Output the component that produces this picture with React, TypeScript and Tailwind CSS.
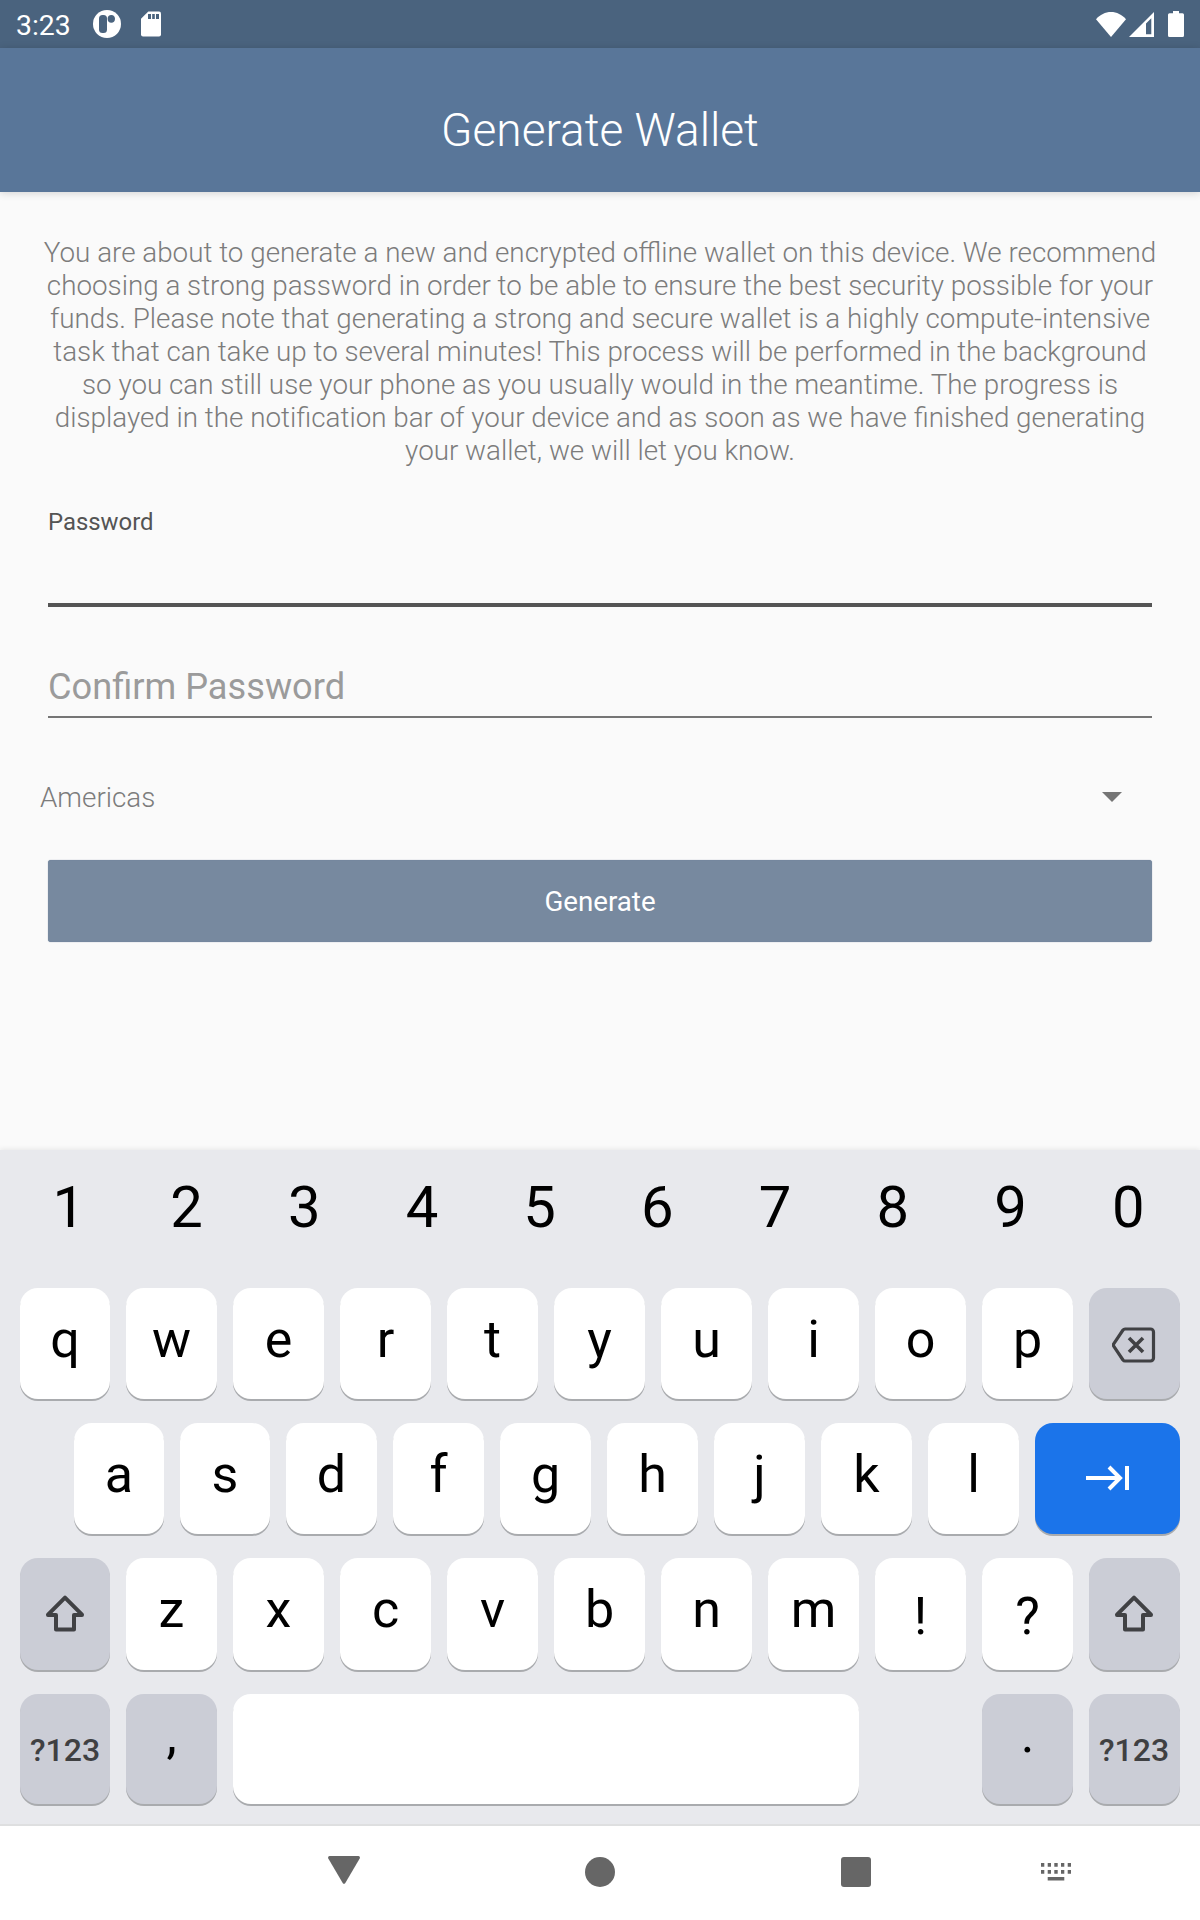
import React from "react";

const description = [
  "You are about to generate a new and encrypted offline wallet on this device. We recommend",
  "choosing a strong password in order to be able to ensure the best security possible for your",
  "funds. Please note that generating a strong and secure wallet is a highly compute-intensive",
  "task that can take up to several minutes! This process will be performed in the background",
  "so you can still use your phone as you usually would in the meantime. The progress is",
  "displayed in the notification bar of your device and as soon as we have finished generating",
  "your wallet, we will let you know.",
];

const cap = "flex shrink-0 justify-center rounded-[18px] shadow-[0_2px_0_#a9abae]";
const white = "bg-white";
const gray = "bg-[#cbcdd6]";

function Letter({ char }: { char: string }) {
  const low = char === "!" || char === "?";
  const width = "qas".includes(char) ? "w-[90px]" : "w-[91px]";
  return (
    <div className={`${cap} ${white} ${width} ${low ? "pt-[29px]" : "pt-[22px]"}`}>
      <span className="text-[52px] leading-[60px]">{char}</span>
    </div>
  );
}

function SoftKey({ char }: { char: string }) {
  return (
    <div className={`${cap} ${gray} w-[91px] ${char === "," ? "pt-[12px]" : "pt-[11px]"}`}>
      <span className="text-[52px] leading-[60px]">{char}</span>
    </div>
  );
}

function SymbolsKey({ width }: { width: string }) {
  return (
    <div className={`${cap} ${gray} ${width} items-center pt-[2px]`}>
      <span className="text-[32px] font-medium leading-[38px] text-[#3f4042]">?123</span>
    </div>
  );
}

function ShiftKey({ width }: { width: string }) {
  return (
    <div className={`${cap} ${gray} ${width} items-center`}>
      <svg width="40" height="40" viewBox="0 0 40 40" fill="none" stroke="#404144" strokeWidth="4" strokeLinejoin="round">
        <path d="M20 3.6 3 20.7V21h8v14.4h18V21h8v-.3z" />
      </svg>
    </div>
  );
}

function StatusBar() {
  return (
    <div className="flex h-12 items-center bg-[#4a637e] pl-4 pr-4 text-white">
      <span className="w-[77px] pt-[3px] text-[28.4px] leading-8">3:23</span>
      <svg width="28" height="28" viewBox="0 0 28 28">
        <circle cx="14" cy="14" r="14" fill="#fff" />
        <rect x="6" y="5" width="8" height="18" rx="3.5" fill="#4a637e" />
        <path d="M14.6 8.8c0-2.4 1.4-3.8 3.7-3.8s3.7 1.4 3.7 3.8-1.4 4-3.7 4-3.7-1.6-3.7-4z" fill="#4a637e" />
      </svg>
      <svg className="ml-5" width="20" height="26" viewBox="0 0 20 26">
        <path d="M7.3.5H18a2 2 0 0 1 2 2v21a2 2 0 0 1-2 2H2a2 2 0 0 1-2-2V7.8z" fill="#fff" />
        <path d="M7 3h3v5H7zM11.2 3h2.6v5h-2.6zM15 3h3v5h-3z" fill="#4a637e" />
      </svg>
      <svg className="ml-auto" width="30" height="25" viewBox="0 0 30 25">
        <path d="M15 25 0 7.200C4 2.700 9.300 0 15 0s11 2.700 15 7.200z" fill="#fff" />
      </svg>
      <svg className="ml-[3px]" width="25" height="25" viewBox="0 0 25 25">
        <path fillRule="evenodd" d="M25 0v25H0zM22.300 6.200 17 11.600V22.300h5.300z" fill="#fff" />
      </svg>
      <svg className="ml-[14px]" width="16" height="26" viewBox="0 0 16 26">
        <path d="M5 0h6v2.300h3.500A1.500 1.500 0 0 1 16 3.800v20.700a1.500 1.500 0 0 1-1.500 1.500h-13A1.500 1.500 0 0 1 0 24.500V3.800a1.500 1.500 0 0 1 1.500-1.500H5z" fill="#fff" />
      </svg>
    </div>
  );
}

function Form() {
  return (
    <main className="h-[958px] px-12 pt-[44px]">
      <div className="-mx-12 flex h-[231px] flex-col items-center text-[27.8px] font-light leading-[33px] text-[#7c7c7c]">
        {description.map((line) => (
          <p key={line} className="whitespace-nowrap">{line}</p>
        ))}
      </div>
      <div className="mt-[41px] h-[99px] border-b-4 border-[#545454] text-[23.9px] leading-7 text-[#545454]">Password</div>
      <div className="mt-[58px] h-[53px] border-b-2 border-[#757575] text-[36.2px] leading-[44px] text-[#9b9b9b]">
        Confirm Password
      </div>
      <div className="-ml-2 mt-[63px] flex h-8 items-center justify-between pr-[30px] text-[27.8px] font-light leading-8 text-[#7c7c7c]">
        <span className="pt-[2px]">Americas</span>
        <svg width="20" height="10" viewBox="0 0 20 10">
          <path d="M0 0h20L10 10z" fill="#757575" />
        </svg>
      </div>
      <button className="mt-[47px] flex h-[82px] w-[1104px] items-center justify-center rounded-[3px] border-y border-[#75879e] bg-[#77899f] pt-[2px] text-[27.7px] text-white shadow-[0_0_1px_#77899f]">
        Generate
      </button>
    </main>
  );
}

function Keyboard() {
  return (
    <section className="h-[674px] bg-[#e8e9ed] text-black shadow-[0_-1px_5px_rgba(0,0,0,0.08)]">
      <div className="flex h-[138px] pl-[10px] pr-[13px] pt-[24px]">
        {[..."1234567890"].map((n) => (
          <span key={n} className="flex-1 text-center text-[58px] leading-[66px]">{n}</span>
        ))}
      </div>
      <div className="flex flex-col gap-6 px-5">
        <div className="flex h-[111px] gap-4">
          {[..."qwertyuiop"].map((c) => <Letter key={c} char={c} />)}
          <div className={`${cap} ${gray} w-[91px] items-center pr-[2px] pt-[2px]`}>
            <svg width="44" height="36" viewBox="0 0 44 36" fill="none" stroke="#404144" strokeWidth="3.2" strokeLinejoin="round">
              <path d="M13 2h25.500a3 3 0 0 1 3 3v26a3 3 0 0 1-3 3H13q-1.200 0-2-1L1.700 19.200q-.7-1.200 0-2.400L11 3q.8-1 2-1z" />
              <path d="m17 11 14 14M31 11 17 25" strokeWidth="3.6" />
            </svg>
          </div>
        </div>
        <div className="flex h-[111px] gap-4 pl-[54px]">
          {[..."asdfghjkl"].map((c) => <Letter key={c} char={c} />)}
          <div className={`${cap} w-[145px] items-center bg-[#1b74ea] pb-[2px]`}>
            <svg width="44" height="26" viewBox="0 0 44 26" fill="none" stroke="#fff" strokeWidth="4">
              <path d="M0 13h34M23 2l11 11-11 11M41 1v24" />
            </svg>
          </div>
        </div>
        <div className="flex h-[112px] gap-4">
          <ShiftKey width="w-[90px]" />
          {[..."zxcvbnm!?"].map((c) => <Letter key={c} char={c} />)}
          <ShiftKey width="w-[91px] pr-px" />
        </div>
        <div className="flex h-[110px] gap-4">
          <SymbolsKey width="w-[90px]" />
          <SoftKey char="," />
          <div className={`${cap} ${white} mr-[107px] w-[626px]`} />
          <SoftKey char="." />
          <SymbolsKey width="w-[91px] pr-px" />
        </div>
      </div>
    </section>
  );
}

function NavBar() {
  return (
    <nav className="flex h-24 items-start border-t-2 border-[#dedfe0] bg-white pl-[328px]">
      <svg className="mt-[30px]" width="32" height="28" viewBox="0 0 32 28">
        <path d="M1.500 0h29q2 .6 1.200 2.500L17.300 27q-1.300 1.700-2.600 0L.3 2.500Q-.5.6 1.500 0z" fill="#666" />
      </svg>
      <div className="ml-[225px] mt-[31px] size-[30px] rounded-full bg-[#666]" />
      <div className="ml-[226px] mt-[31px] size-[30px] rounded-[3px] bg-[#666]" />
      <svg className="ml-[170px] mt-[37px]" width="30" height="18" viewBox="0 0 30 18">
        <path
          d="M0 0h3.300v3.700H0zM6.700 0H10v3.700H6.700zM13.300 0h3.400v3.700h-3.400zM20 0h3.300v3.700H20zM26.700 0H30v3.700h-3.300zM0 7h3.300v3.700H0zM6.700 7H10v3.700H6.700zM13.300 7h3.400v3.700h-3.400zM20 7h3.300v3.700H20zM26.700 7H30v3.700h-3.300zM6.700 14h16.600v3.500H6.700z"
          fill="#666"
        />
      </svg>
    </nav>
  );
}

export default function App() {
  return (
    <div className="h-[1920px] w-[1200px] overflow-hidden bg-[#fafafa] font-['Roboto',sans-serif]">
      <StatusBar />
      <header className="flex h-36 justify-center bg-[#597699] pt-[54px] shadow-[0_1px_8px_rgba(0,0,0,0.16)]">
        <h1 className="text-[46px] font-light leading-[56px] text-white">Generate Wallet</h1>
      </header>
      <Form />
      <Keyboard />
      <NavBar />
    </div>
  );
}
